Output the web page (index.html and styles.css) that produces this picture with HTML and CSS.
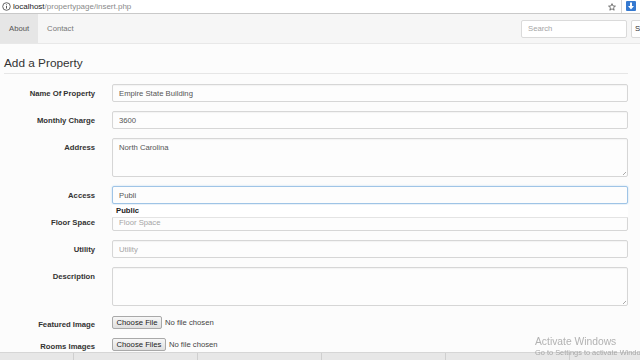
FILE: index.html
```html
<!DOCTYPE html>
<html lang="en">
<head>
    <meta charset="UTF-8">
    <meta name="viewport" content="width=device-width, initial-scale=1.0">
    <title>Add a Property</title>
    <link rel="stylesheet" href="styles.css">
</head>
<body>
    <div class="chrome">
        <div class="omnibox">
            <svg class="info-icon" width="9" height="9" viewBox="0 0 9 9">
                <circle cx="4.5" cy="4.5" r="3.8" fill="none" stroke="#555" stroke-width="0.9"/>
                <line x1="4.5" y1="4" x2="4.5" y2="6.6" stroke="#555" stroke-width="1"/>
                <circle cx="4.5" cy="2.7" r="0.55" fill="#555"/>
            </svg>
            <span class="host">localhost</span><span class="path">/propertypage/insert.php</span>
            <svg class="star" width="8" height="8" viewBox="0 0 10 10">
                <polygon points="5,0.8 6.2,3.7 9.3,3.9 6.9,5.9 7.7,9 5,7.3 2.3,9 3.1,5.9 0.7,3.9 3.8,3.7" fill="none" stroke="#444" stroke-width="0.9" stroke-linejoin="round"/>
            </svg>
        </div>
        <div class="ext">
            <svg width="10" height="11" viewBox="0 0 10 11">
                <rect x="0" y="0" width="10" height="10" rx="1" fill="#3579d0"/>
                <rect x="4" y="1.5" width="2" height="4" fill="#fff"/>
                <polygon points="2,5 8,5 5,8.5" fill="#fff"/>
            </svg>
        </div>
    </div>

    <nav class="navbar">
        <ul class="nav">
            <li class="active"><a href="#">About</a></li>
            <li><a href="#">Contact</a></li>
        </ul>
        <form class="navbar-search">
            <input type="text" placeholder="Search">
            <button type="button">Submit</button>
        </form>
    </nav>

    <main class="content">
        <h3 class="page-header">Add a Property</h3>
        <form class="form-horizontal">
            <div class="form-group">
                <label>Name Of Property</label>
                <div class="field"><input type="text" value="Empire State Building"></div>
            </div>
            <div class="form-group">
                <label>Monthly Charge</label>
                <div class="field"><input type="text" value="3600"></div>
            </div>
            <div class="form-group">
                <label>Address</label>
                <div class="field area"><textarea>North Carolina</textarea></div>
            </div>
            <div class="form-group">
                <label>Access</label>
                <div class="field">
                    <input type="text" class="focused" value="Publi">
                    <div class="autocomplete">Public</div>
                </div>
            </div>
            <div class="form-group">
                <label>Floor Space</label>
                <div class="field"><input type="text" placeholder="Floor Space"></div>
            </div>
            <div class="form-group">
                <label>Utility</label>
                <div class="field"><input type="text" placeholder="Utility"></div>
            </div>
            <div class="form-group">
                <label>Description</label>
                <div class="field area"><textarea></textarea></div>
            </div>
            <div class="form-group file">
                <label>Featured Image</label>
                <div class="file-input"><button type="button">Choose File</button><span>No file chosen</span></div>
            </div>
            <div class="form-group file">
                <label>Rooms Images</label>
                <div class="file-input"><button type="button">Choose Files</button><span>No file chosen</span></div>
            </div>
        </form>
    </main>

    <div class="taskbar">
        <div class="cell first"></div>
        <div class="cell"></div>
        <div class="cell"></div>
        <div class="cell"></div>
        <div class="cell"></div>
    </div>

    <div class="watermark">
        <div class="wm-title">Activate Windows</div>
        <div class="wm-sub">Go to Settings to activate Windows.</div>
    </div>
</body>
</html>
```

FILE: styles.css
```css
* {
    box-sizing: border-box;
}
html, body {
    margin: 0;
}
body {
    width: 640px;
    height: 360px;
    overflow: hidden;
    background-color: #fcfcfc;
    font-family: "Liberation Sans", Arial, sans-serif;
    font-size: 7.7px;
    color: #333;
}

/* browser bar */
.chrome {
    display: flex;
    height: 14px;
    background-color: #fff;
    border-bottom: 1px solid #c9c9c9;
}
.omnibox {
    flex: 1;
    display: flex;
    align-items: center;
    padding-left: 2px;
    border-right: 1px solid #d6d6d6;
    font-size: 8px;
}
.info-icon {
    margin-right: 2px;
}
.omnibox .host {
    color: #222;
}
.omnibox .path {
    color: #8a8a8a;
}
.omnibox .star {
    margin-left: auto;
    margin-right: 5px;
}
.ext {
    width: 18px;
    display: flex;
    align-items: center;
    justify-content: center;
}

/* navbar */
.navbar {
    display: flex;
    align-items: center;
    height: 30px;
    background-color: #f6f6f6;
    border-bottom: 1px solid #e8e8e8;
    overflow: hidden;
}
.nav {
    display: flex;
    align-self: stretch;
    list-style: none;
    margin: 0;
    padding: 0;
}
.nav a {
    display: flex;
    align-items: center;
    height: 100%;
    padding: 0 9px;
    color: #777;
    text-decoration: none;
}
.nav .active a {
    background-color: #e6e6e6;
    color: #555;
}
.navbar-search {
    display: flex;
    gap: 4px;
    margin-left: auto;
    margin-right: -31px;
}
.navbar-search input,
.navbar-search button {
    height: 18px;
    border: 1px solid #dadada;
    border-radius: 2px;
    background-color: #fff;
    font-family: inherit;
    font-size: 7.7px;
    color: #555;
}
.navbar-search input {
    width: 106px;
    padding: 0 6px;
}
.navbar-search button {
    width: 40px;
    padding: 0 3px;
    text-align: left;
    color: #333;
}
::placeholder {
    color: #a5a5a5;
}

/* form */
.content {
    padding: 0 12px 0 4px;
}
.page-header {
    margin: 11px 0 10px;
    padding-bottom: 2px;
    border-bottom: 1px solid #e6e6e6;
    font-size: 11.8px;
    font-weight: normal;
    line-height: 16px;
    color: #333;
}
.form-group {
    display: grid;
    grid-template-columns: 91px 1fr;
    column-gap: 17px;
    align-items: start;
    margin-bottom: 9px;
}
.form-group label {
    padding-top: 4px;
    line-height: 11px;
    font-weight: bold;
    text-align: right;
    color: #333;
}
.field {
    position: relative;
}
.field input,
.field textarea {
    display: block;
    width: 100%;
    height: 18px;
    padding: 0 6px;
    border: 1px solid #d6d6d6;
    border-radius: 2px;
    background-color: #fdfdfd;
    box-shadow: inset 0 1px 1px rgba(0, 0, 0, 0.04);
    font-family: inherit;
    font-size: 7.7px;
    color: #555;
    outline: none;
}
.field textarea {
    height: 39px;
    padding: 4px 6px;
    resize: none;
}
.field.area::after {
    content: "";
    position: absolute;
    right: 2px;
    bottom: 2px;
    width: 3px;
    height: 3px;
    background: linear-gradient(135deg, transparent 45%, #aaa 45%, #aaa 60%, transparent 60%);
}
.field input.focused {
    border-color: #9fc4e6;
    box-shadow: 0 0 2px rgba(102, 175, 233, 0.45);
}
.autocomplete {
    position: absolute;
    z-index: 2;
    top: calc(100% + 1px);
    left: 0;
    right: 0;
    height: 13px;
    padding-left: 4px;
    line-height: 12px;
    background-color: #fff;
    border-bottom: 1px solid #e4e4e4;
    font-weight: bold;
    color: #222;
}
.form-group.file {
    margin-bottom: 7px;
}
.file-input {
    display: flex;
    align-items: center;
    gap: 3px;
    height: 15px;
    color: #444;
}
.file-input button {
    height: 13px;
    padding: 0 3.5px;
    border: 1px solid #a9a9a9;
    border-radius: 2px;
    background: linear-gradient(#f7f7f7, #dfdfdf);
    font-family: inherit;
    font-size: 7.7px;
    color: #222;
}

/* overlays */
.taskbar {
    position: fixed;
    left: 0;
    bottom: 0;
    display: flex;
    width: 640px;
    height: 8px;
    background-color: #e7e7e7;
    border-top: 1px solid #d6d6d6;
}
.taskbar .cell {
    flex: none;
    width: 124px;
    border-right: 1px solid #cfcfcf;
}
.taskbar .cell.first {
    width: 74px;
}
.watermark {
    position: fixed;
    left: 535px;
    top: 335px;
    white-space: nowrap;
    color: #b2b2b2;
}
.wm-title {
    font-size: 10.3px;
    line-height: 13px;
}
.wm-sub {
    font-size: 7.4px;
    line-height: 10px;
    color: #a8a8a8;
}
```
